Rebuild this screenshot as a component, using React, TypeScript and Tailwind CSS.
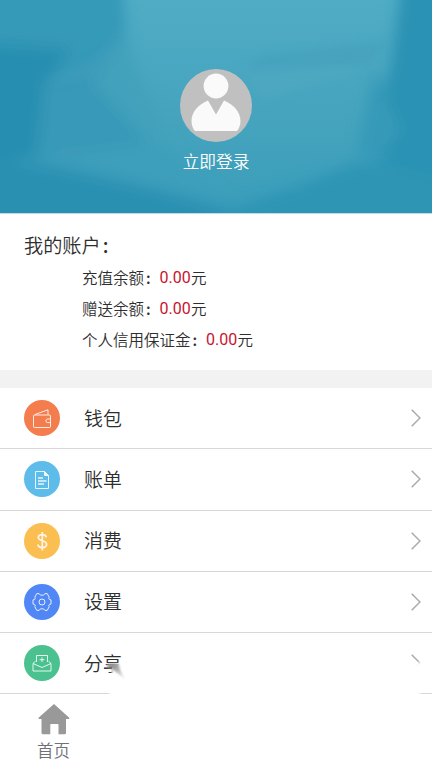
import type { ReactNode } from 'react'
import { clsx } from 'clsx'

const balances = [
  { label: '充值余额:', amount: '0.00' },
  { label: '赠送余额:', amount: '0.00' },
  { label: '个人信用保证金:', amount: '0.00' },
]

function WalletIcon() {
  return (
    <>
      <rect x="9.5" y="15" width="17" height="12.5" rx="1" />
      <path d="M11 14.5 24 9.8v4.7M26.5 19h-2.8a1.7 1.7 0 0 0 0 3.6h2.8" />
    </>
  )
}

function BillIcon() {
  return (
    <>
      <path d="M11.5 10.5h9l4 4v13h-13z" />
      <path d="M20.5 10.5v4h4z" fill="currentColor" />
      <path d="M14 17h5M14 20h8.5M14 23h6" strokeWidth="1.3" />
    </>
  )
}

function DollarIcon() {
  return (
    <path
      d="M22.3 14.3c-.4-1.7-1.8-2.6-4-2.6-2.4 0-4 1.1-4 2.9 0 4.2 8.3 2.1 8.3 6.7 0 2.1-1.7 3.3-4.2 3.3-2.6 0-4.2-1.1-4.5-3.1M18.3 9v18.5"
      strokeWidth="1.7"
    />
  )
}

function GearIcon() {
  return (
    <>
      <path d="M12.8 9.600h2.200c.8 2.200 5.200 2.200 6 0h2.200l2 3.600c-1 1.500-.3 2.500 1.800 2.700v4.200c-2.100.2-2.800 1.200-1.800 2.700l-2 3.600H21c-.8-2.200-5.200-2.200-6 0h-2.200l-2-3.600c1-1.500.3-2.500-1.800-2.700v-4.200c2.100-.2 2.800-1.200 1.800-2.700z" />
      <circle cx="18" cy="18" r="3" />
    </>
  )
}

function ShareIcon() {
  return (
    <>
      <path d="M12.5 17v-6.500h11V17M18 12.300v4.800M15.600 14.700h4.800" />
      <path d="M11.5 16.200 9 18.500V26h18v-7.500l-2.500-2.300M9 18.500l9 4 9-4" />
    </>
  )
}

const menu: { label: string; color: string; icon: ReactNode }[] = [
  { label: '钱包', color: 'bg-[#f47d4e]', icon: <WalletIcon /> },
  { label: '账单', color: 'bg-[#5dbce9]', icon: <BillIcon /> },
  { label: '消费', color: 'bg-[#fbbe50]', icon: <DollarIcon /> },
  { label: '设置', color: 'bg-[#5087f5]', icon: <GearIcon /> },
  { label: '分享', color: 'bg-[#4bc190]', icon: <ShareIcon /> },
]

function HeaderBackdrop() {
  return (
    <svg className="absolute inset-0 h-full w-full" viewBox="0 0 432 213" preserveAspectRatio="none">
      <defs>
        <linearGradient id="sky" x1="0" y1="0" x2="0" y2="1">
          <stop offset="0" stopColor="#50acc5" />
          <stop offset="0.5" stopColor="#47a4be" />
          <stop offset="1" stopColor="#3a9eba" />
        </linearGradient>
        <filter id="soft" x="-20%" y="-20%" width="140%" height="140%">
          <feGaussianBlur stdDeviation="7" />
        </filter>
        <filter id="facet" x="-20%" y="-40%" width="140%" height="180%">
          <feGaussianBlur stdDeviation="4" />
        </filter>
      </defs>
      <rect width="432" height="213" fill="url(#sky)" />
      <g filter="url(#soft)">
        <path d="M-20-20H122L126 35 160 145 230 204 270 240H-20z" fill="#3599b8" />
        <path d="M-20 44 70 50 44 84 36 155-20 170z" fill="#288eb1" />
        <path d="M44 83 122 42 92 80 160 145 36 156z" fill="#3899b8" />
        <path d="M122 30 142 80 175 155 150 145 92 82z" fill="#43a1bc" />
        <path d="M36 157 155 142 230 204z" fill="#3d9fbb" />
        <path d="M-20 160 36 165 150 190 222 210 230 240H-20z" fill="#2b90b2" />
        <path d="M225 210 300 185 355 162 460 168V240H230z" fill="#2f95b5" />
        <path d="M402-20H460V185L370 158 392 60z" fill="#2c92b4" />
        <path d="M374 68 357 155 380 160 402 130z" fill="#369ab8" />
      </g>
      <g filter="url(#facet)">
        <path d="M260 56 390 40 368 64 245 68z" fill="#3d9cb8" opacity=".4" />
        <path d="M250 74 368 67 260 101z" fill="#50a9c1" opacity=".6" />
        <path d="M44 84 120 44 92 78z" fill="#43a0bc" opacity=".35" />
      </g>
    </svg>
  )
}

function Avatar() {
  return (
    <svg className="h-[73px] w-[72px]" viewBox="0 0 72 73">
      <ellipse cx="36" cy="36.5" rx="36" ry="36.5" fill="#c0c0c0" />
      <circle cx="36" cy="17" r="12.4" fill="#fafafa" />
      <path d="M28 31.5 36 45.5 44 31.5C54 36 60.5 43 60.5 52c0 4-1.3 7.500-3.500 10H15c-2.200-2.500-3.500-6-3.500-10 0-9 6.500-16 16.500-20.500z" fill="#fafafa" />
    </svg>
  )
}

export default function App() {
  return (
    <div className="relative flex h-[768px] w-[432px] flex-col overflow-hidden bg-white font-['Noto_Sans_CJK_SC',sans-serif] font-[350] text-[#2e2e2e]">
      <header className="relative h-[213px] shrink-0 overflow-hidden">
        <HeaderBackdrop />
        <div className="relative flex flex-col items-center pt-[69px] text-white">
          <Avatar />
          <span className="mt-[7px] text-[16.7px] leading-6">立即登录</span>
        </div>
      </header>

      <section className="h-[157px] shrink-0 border-t border-[#c2dce5] pt-[15px]">
        <h1 className="pl-6 text-[19.2px] leading-8">我的账户<span className="ml-0.5 font-medium">:</span></h1>
        <div className="pt-px pl-[82px]">
          {balances.map(({ label, amount }) => (
            <p key={label} className="flex h-[31.2px] items-center text-[15.5px]">
              <span>{label.slice(0, -1)}</span>
              <span className="w-[15.5px] pl-0.5 font-medium">:</span>
              <span className="w-[31.5px] pt-px font-[Roboto] text-[16px] font-normal text-[#c8142f]">{amount}</span>
              <span>元</span>
            </p>
          ))}
        </div>
      </section>

      <div className="h-[18px] shrink-0 bg-[#f2f2f2]" />

      <nav className="shrink-0">
        {menu.map(({ label, color, icon }) => (
          <a key={label} className="flex h-[61.25px] items-center border-b border-[#d8d8d8] pr-[11px] pl-6">
            <span className={clsx('flex size-9 rounded-full text-white/85', color)}>
              <svg viewBox="0 0 36 36" className="size-9" fill="none" stroke="currentColor" strokeWidth="1" strokeLinejoin="round">
                {icon}
              </svg>
            </span>
            <span className="ml-6 flex-1 pb-px text-[18.9px] leading-7">{label}</span>
            <svg viewBox="0 0 10 18" className="h-[18px] w-2.5" fill="none" stroke="#aaa" strokeWidth="1.5">
              <path d="M.7.7 9 9 .7 17.3" />
            </svg>
          </a>
        ))}
      </nav>

      <footer className="flex flex-1 pl-[37px]">
        <a className="flex flex-col items-center pt-2.5 text-[#707078]">
          <svg viewBox="0 0 32 31" className="h-[31px] w-8" fill="#999">
            <path d="M16 0 31 13.500c.7.800.3 1.500-.7 1.500H28v14c0 .8-.5 1.200-1.200 1.200H20.500V21c0-.7-.4-1-1-1h-6.200c-.6 0-1 .3-1 1v9.200H4.700c-.7 0-1.200-.4-1.200-1.200V15H1.500C.5 15 .1 14.300.8 13.500z" />
          </svg>
          <span className="mt-[3px] text-[16.5px] leading-6">首页</span>
        </a>
      </footer>

      {/* white haze over the bottom bar */}
      <svg className="pointer-events-none absolute bottom-0 left-0 h-[128px] w-full" viewBox="0 0 432 128">
        <defs>
          <linearGradient id="smudge" x1="0" y1="0" x2="1" y2="1">
            <stop offset="0.2" stopColor="#8c8c8c" />
            <stop offset="1" stopColor="#f2f2f2" />
          </linearGradient>
          <filter id="haze" x="-5%" y="-20%" width="110%" height="140%">
            <feGaussianBlur stdDeviation="1.3" />
          </filter>
          <filter id="edge" x="-30%" y="-30%" width="160%" height="160%">
            <feGaussianBlur stdDeviation=".8" />
          </filter>
        </defs>
        <path d="M107 25 125 23H405L414 25 422 21V50L419 55V140H116L109 54 118 41z" fill="#fff" filter="url(#haze)" />
        <path d="M107 24.5q6-2 12 0 0 5 6 15-8-8-18-13z" fill="url(#smudge)" filter="url(#edge)" />
        <path d="M104 28h8" stroke="#444" strokeWidth="1.2" />
      </svg>
    </div>
  )
}
